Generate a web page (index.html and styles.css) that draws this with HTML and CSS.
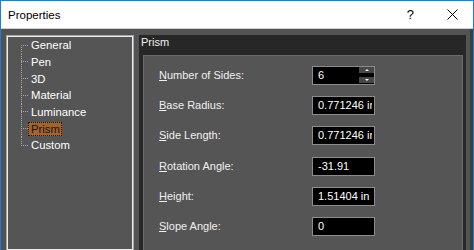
FILE: index.html
```html
<!DOCTYPE html>
<html>
<head>
<meta charset="utf-8">
<link rel="stylesheet" href="styles.css">
</head>
<body>
<div class="window">
  <div class="titlebar">
    <span class="title">Properties</span>
    <div class="tb-buttons">
      <span class="help">?</span>
      <span class="close"><svg width="11" height="11" viewBox="0 0 11 11"><path d="M0.5 0.5 L10.5 10.5 M10.5 0.5 L0.5 10.5" stroke="#000" stroke-width="1" fill="none"/></svg></span>
    </div>
  </div>
  <div class="content">
    <div class="tree-panel">
      <ul class="tree">
        <li><span class="node">General</span></li>
        <li><span class="node">Pen</span></li>
        <li><span class="node">3D</span></li>
        <li><span class="node">Material</span></li>
        <li><span class="node">Luminance</span></li>
        <li><span class="node selected">Prism</span></li>
        <li><span class="node">Custom</span></li>
      </ul>
    </div>
    <div class="page">
      <div class="page-header">Prism</div>
      <div class="page-body">
        <div class="form">
          <label class="lbl"><u>N</u>umber of Sides:</label>
          <div class="field">
            <input class="box" type="text" value="6" readonly>
            <div class="spinner"><span class="spin-btn up"></span><span class="spin-btn down"></span></div>
          </div>
          <label class="lbl"><u>B</u>ase Radius:</label>
          <div class="field"><input class="box" type="text" value="0.771246 in" readonly></div>
          <label class="lbl"><u>S</u>ide Length:</label>
          <div class="field"><input class="box" type="text" value="0.771246 in" readonly></div>
          <label class="lbl"><u>R</u>otation Angle:</label>
          <div class="field"><input class="box" type="text" value="-31.91" readonly></div>
          <label class="lbl"><u>H</u>eight:</label>
          <div class="field"><input class="box" type="text" value="1.51404 in" readonly></div>
          <label class="lbl"><u>S</u>lope Angle:</label>
          <div class="field"><input class="box" type="text" value="0" readonly></div>
        </div>
      </div>
    </div>
  </div>
</div>
</body>
</html>
```
FILE: styles.css
```css
html, body {
  margin: 0;
  background: #535353;
}
body {
  font-family: "Liberation Sans", Arial, sans-serif;
  font-size: 11px;
}
.window {
  width: 474px;
  height: 250px;
  box-sizing: border-box;
  border: 1px solid #1b7fd6;
  border-bottom: none;
  display: flex;
  flex-direction: column;
  overflow: hidden;
  background: #535353;
}
.titlebar {
  height: 27px;
  flex: none;
  background: #ffffff;
  border-bottom: 1px solid #d0d0d0;
  display: flex;
  align-items: center;
  padding-left: 7px;
}
.title {
  font-size: 11.5px;
  color: #000;
}
.tb-buttons {
  margin-left: auto;
  display: flex;
  align-items: center;
  margin-right: 15px;
}
.help {
  font-size: 13px;
  color: #000;
  margin-right: 33px;
}
.close {
  display: flex;
}
.content {
  flex: 1;
  min-height: 0;
  display: flex;
  gap: 5px;
  padding: 6px 4px 0 5px;
  border-right: 3px solid #3d3d3d;
}
.tree-panel {
  width: 128px;
  flex: none;
  box-sizing: border-box;
  border: 1px solid #a6a6a6;
  border-bottom: none;
  box-shadow: inset 0 0 0 1px #eeeeee;
  background: #555555;
}
.tree {
  list-style: none;
  margin: 0;
  padding: 1px 0 0 14px;
  font-size: 11.3px;
}
.tree li {
  height: 16.67px;
  display: flex;
  align-items: center;
  padding-left: 7px;
  background-image:
    repeating-linear-gradient(to bottom, #a8a8a8 0 1px, transparent 1px 2px),
    repeating-linear-gradient(to right, #a8a8a8 0 1px, transparent 1px 2px);
  background-size: 1px 100%, 8px 1px;
  background-position: 0 0, 0 50%;
  background-repeat: no-repeat;
}
.tree li:first-child {
  background-size: 1px 50%, 8px 1px;
  background-position: 0 100%, 0 50%;
}
.tree li:last-child {
  background-size: 1px 50%, 8px 1px;
  background-position: 0 0, 0 50%;
}
.node {
  display: inline-block;
  line-height: 12px;
  padding: 0 1px 0 2px;
  border: 1px dotted transparent;
  color: #ffffff;
}
.node.selected {
  background: #a3632b;
  color: #151515;
  border-color: #1a1a1a;
}
.page {
  flex: 1;
  display: flex;
  flex-direction: column;
  background: #272727;
  padding: 0 3px 0 4px;
}
.page-header {
  height: 20px;
  line-height: 14px;
  color: #f2f2f2;
  margin-left: -2px;
  flex: none;
}
.page-body {
  flex: 1;
  background: #555555;
  border: 1px solid #6a6a6a;
  border-bottom: none;
}
.form {
  display: grid;
  grid-template-columns: 153px 63px;
  grid-auto-rows: 19px;
  row-gap: 11.2px;
  padding: 10px 0 0 15px;
}
.lbl {
  color: #f0f0f0;
  line-height: 19px;
  white-space: nowrap;
}
.field {
  position: relative;
}
.box {
  width: 63px;
  height: 19px;
  box-sizing: border-box;
  margin: 0;
  border: 1px solid #8c8c8c;
  background: #000;
  color: #fff;
  font: inherit;
  padding: 0 2px 1px 5px;
  outline: none;
}
.spinner {
  position: absolute;
  top: 1px;
  right: 1px;
  width: 15px;
  height: 16px;
  display: flex;
  flex-direction: column;
  justify-content: space-between;
}
.spin-btn {
  height: 6px;
  background: #474747;
  display: flex;
  align-items: center;
  justify-content: center;
}
.spin-btn::after {
  content: "";
  width: 0;
  height: 0;
  border-left: 2px solid transparent;
  border-right: 2px solid transparent;
}
.spin-btn.up::after {
  border-bottom: 2px solid #fff;
}
.spin-btn.down::after {
  border-top: 2px solid #fff;
}
```
